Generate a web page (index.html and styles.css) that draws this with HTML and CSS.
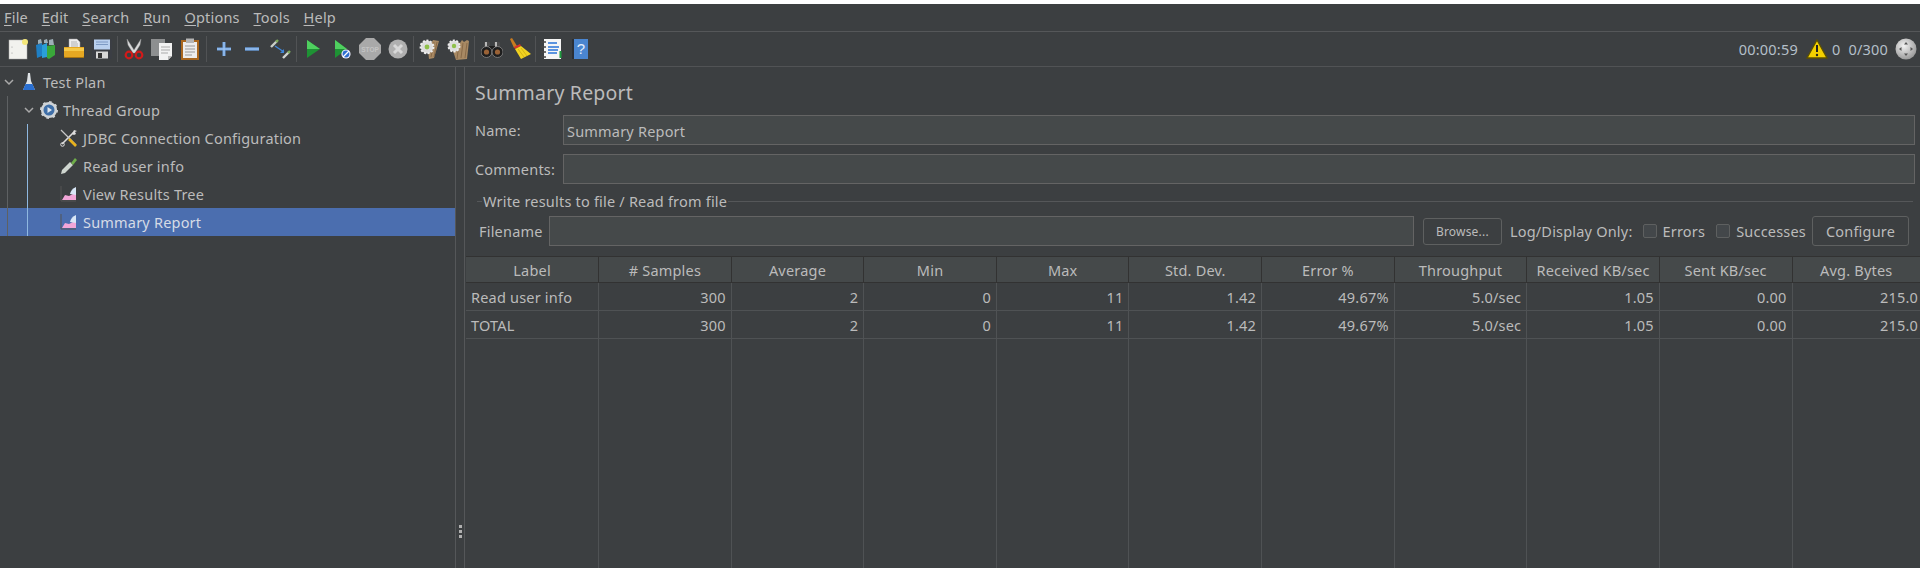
FILE: index.html
```html
<!DOCTYPE html>
<html lang="en">
<head>
<meta charset="utf-8">
<title>Apache JMeter - Summary Report</title>
<link rel="stylesheet" href="styles.css">
</head>
<body>
<div class="app">
  <nav class="menubar">
    <span><u>F</u>ile</span><span><u>E</u>dit</span><span><u>S</u>earch</span><span><u>R</u>un</span><span><u>O</u>ptions</span><span><u>T</u>ools</span><span><u>H</u>elp</span>
  </nav>
  <div class="toolbar">
    <button class="tb"><svg viewBox="0 0 22 22"><rect x="2" y="2" width="18" height="19" fill="#f2f2ee" stroke="#aaa" stroke-width=".5"/><circle cx="18" cy="4" r="3" fill="#f4e77a"/><circle cx="5" cy="9" r=".6" fill="#999"/><circle cx="5" cy="15" r=".6" fill="#999"/></svg></button>
    <button class="tb"><svg viewBox="0 0 22 22"><path d="M1 7l6-2v13l-5 2z" fill="#1f7fc4"/><path d="M7 7l5-2v14l-5 1z" fill="#2a9fd8"/><path d="M12 8l8-1v10l-6 4-2-1z" fill="#3aa83a"/><path d="M3 6V2l3-1 1 4zM9 5V2l3-1 1 4zM14 7V2l4-1 1 6z" fill="#9fb0b8"/></svg></button>
    <button class="tb"><svg viewBox="0 0 22 22"><path d="M6 1h8l3 3v6H6z" fill="#eee" stroke="#999" stroke-width=".5"/><path d="M8 4h6M8 6h7M8 8h7" stroke="#999" stroke-width=".7"/><path d="M1 9h20v9q0 2-2 2H3q-2 0-2-2z" fill="#e6a822"/><path d="M1 10h20v3H1z" fill="#f6c948"/><path d="M1 19h20v1H1z" fill="#a87412"/></svg></button>
    <button class="tb"><svg viewBox="0 0 22 22"><rect x="1" y="1" width="20" height="20" rx="1.5" fill="#3b3e44"/><rect x="3" y="1.5" width="16" height="10" fill="#b9d0ee"/><path d="M5 4h12M5 6.5h12" stroke="#6d8cb8" stroke-width=".8"/><rect x="5" y="13.5" width="12" height="7" fill="#d8d8d8"/><rect x="7" y="15" width="4" height="5" fill="#333"/></svg></button>
    <span class="sep"></span>
    <button class="tb"><svg viewBox="0 0 22 22"><path d="M4 1l7 11 7-11-1 6-5 8h-2L5 7z" fill="#d9dadb" stroke="#999" stroke-width=".4"/><circle cx="6" cy="17" r="3.3" fill="none" stroke="#d21a1a" stroke-width="2.2"/><circle cx="16" cy="17" r="3.3" fill="none" stroke="#d21a1a" stroke-width="2.2"/></svg></button>
    <button class="tb"><svg viewBox="0 0 22 22"><rect x="0" y="1" width="14" height="17" fill="#8d8f90"/><path d="M8 5h13v13l-4 4H8z" fill="#f2f2f2"/><path d="M10 9h9M10 12h9M10 15h7" stroke="#aaa"/><path d="M17 22v-4h4z" fill="#bbb"/></svg></button>
    <button class="tb"><svg viewBox="0 0 22 22"><rect x="2" y="2" width="18" height="20" fill="#a9671f"/><rect x="4" y="4" width="14" height="16" fill="#ededed"/><rect x="7" y="0.5" width="8" height="4.5" fill="#b5b5b5"/><path d="M6 8h10M6 11h10M6 14h10M6 17h7" stroke="#999"/></svg></button>
    <span class="sep wide"></span>
    <button class="tb"><svg viewBox="0 0 22 22"><path d="M11 4v14M4 11h14" stroke="#6a9fe0" stroke-width="3"/><path d="M11 4v14M4 11h14" stroke="#a9cbf2" stroke-width="1"/></svg></button>
    <button class="tb"><svg viewBox="0 0 22 22"><path d="M4 11h14" stroke="#6a9fe0" stroke-width="3.4"/><path d="M4 11h14" stroke="#a9cbf2" stroke-width="1"/></svg></button>
    <button class="tb"><svg viewBox="0 0 22 22"><path d="M2 9l6-6" stroke="#c9cfc9" stroke-width="2.4"/><path d="M7 4l2-2" stroke="#7fae5c" stroke-width="2.4"/><path d="M14 20l6-6" stroke="#d2d6d2" stroke-width="2.4"/><path d="M19 15l2-2" stroke="#7fae5c" stroke-width="2.4"/><path d="M6 8l9 6" stroke="#3f86d8" stroke-width="1.4"/><path d="M15 11v4h-4z" fill="#3f86d8"/></svg></button>
    <span class="sep wide"></span>
    <button class="tb"><svg viewBox="0 0 22 22"><path d="M4 2l13 9-13 9z" fill="#1e9234"/><path d="M4 2l13 9H4z" fill="#4fd05f"/></svg></button>
    <button class="tb"><svg viewBox="0 0 22 22"><path d="M4 2l12 9-12 9z" fill="#1e9234"/><path d="M4 2l12 9H4z" fill="#4fd05f"/><circle cx="15" cy="16" r="4.6" fill="#eef"/><circle cx="15" cy="16" r="3.4" fill="#2f6fd0"/><path d="M12 19l6-6" stroke="#fff" stroke-width="1.3"/></svg></button>
    <button class="tb"><svg viewBox="0 0 22 22"><path d="M7 0h8l7 7v8l-7 7H7l-7-7V7z" fill="#a9a9a9"/><text x="11" y="13.5" class="stoptext">STOP</text></svg></button>
    <button class="tb"><svg viewBox="0 0 22 22"><circle cx="11" cy="11" r="9.5" fill="#b0b0b0"/><path d="M7 7l8 8M15 7l-8 8" stroke="#d8d8d8" stroke-width="3"/></svg></button>
    <span class="sep"></span>
    <button class="tb"><svg viewBox="0 0 22 22"><path d="M14 2l6 1-5 17-5 1-1-9z" fill="#a88963"/><path d="M15 4l-3 15M18 4l-3 15" stroke="#7a5c3c" stroke-width=".7"/><circle cx="8" cy="9" r="6.4" fill="#ddd" stroke="#eee" stroke-dasharray="2 1.6" stroke-width="2"/><circle cx="8" cy="9" r="2.4" fill="#8fc04a"/></svg></button>
    <button class="tb"><svg viewBox="0 0 22 22"><path d="M9 3l4 2 2-3 2 2 3-2 2 1-2 18-11 1-3-9z" fill="#a88963"/><path d="M12 6l-2 15M16 5l-2 15M20 5l-2 15" stroke="#7a5c3c" stroke-width=".7"/><circle cx="7" cy="8" r="5.6" fill="#ddd" stroke="#eee" stroke-dasharray="2 1.5" stroke-width="1.8"/><circle cx="7" cy="8" r="2.2" fill="#8fc04a"/></svg></button>
    <span class="sep wide"></span>
    <button class="tb"><svg viewBox="0 0 22 22"><rect x="3" y="4" width="6" height="7" rx="1" fill="#4a4a4a"/><rect x="13" y="4" width="6" height="7" rx="1" fill="#4a4a4a"/><rect x="4" y="4" width="2" height="6" fill="#b8b8b8"/><rect x="14" y="4" width="2" height="6" fill="#b8b8b8"/><rect x="8" y="8" width="6" height="5" fill="#1e1e1e"/><circle cx="5.500" cy="14" r="5.500" fill="#1e1e1e" stroke="#8a8a8a" stroke-width=".8"/><circle cx="16.500" cy="14" r="5.500" fill="#1e1e1e" stroke="#8a8a8a" stroke-width=".8"/><circle cx="5.500" cy="14" r="2.600" fill="#9a6236"/><circle cx="16.500" cy="14" r="2.600" fill="#9a6236"/></svg></button>
    <button class="tb"><svg viewBox="0 0 22 22"><path d="M1 1l2-1 5 8-3 2z" fill="#c87b20"/><path d="M5 9l6-3 1 2-6 3z" fill="#d8302a"/><path d="M6 11l6-3 10 8-10 5z" fill="#f1d321"/><path d="M9 11l6 8M12 10l6 8" stroke="#c9a60c" stroke-width=".7"/></svg></button>
    <span class="sep"></span>
    <button class="tb"><svg viewBox="0 0 22 22"><rect x="3" y="1" width="17" height="20" fill="#f5f5f5"/><path d="M7 5h9M7 9h11M7 12h10M7 15h9" stroke="#2873d8" stroke-width="1.5"/><path d="M0 4h5M0 9h5M0 14h5M0 19h5" stroke="#444" stroke-width="1.6"/><rect x="18.500" y="13" width="2" height="7" fill="#1f9a3f"/></svg></button>
    <button class="tb"><svg viewBox="0 0 22 22"><rect x="3" y="1" width="4" height="20" fill="#2b2f36"/><rect x="5" y="1" width="14" height="20" fill="#4a85cf"/><text x="12" y="16" class="helptext">?</text></svg></button>
    <div class="status">
      <span>00:00:59</span>
      <svg class="warn" viewBox="0 0 22 20"><path d="M11 1l10 18H1z" fill="#f4d000" stroke="#5c5000" stroke-width="1.300"/><path d="M11 6v7" stroke="#222" stroke-width="2"/><circle cx="11" cy="16" r="1.200" fill="#222"/></svg>
      <span class="st-n">0</span>
      <span>0/300</span>
      <svg class="globe" viewBox="0 0 22 22"><defs><radialGradient id="g" cx=".4" cy=".35" r=".75"><stop offset="0" stop-color="#f3f3f3"/><stop offset="1" stop-color="#8e8e8e"/></radialGradient></defs><circle cx="11" cy="11" r="10.500" fill="url(#g)"/><path d="M11 4l2 2.500h-4zM11 18l2-2.500h-4zM4 11l2.500-2v4zM18 11l-2.500-2v4z" fill="#555"/></svg>
    </div>
  </div>
  <main class="split">
    <aside class="tree">
      <div class="node lvl0"><svg class="chev" viewBox="0 0 10 10"><path d="M1 3l4 4 4-4" fill="none" stroke="#aaa" stroke-width="1.500"/></svg><svg class="ico" viewBox="0 0 18 18"><path d="M8 0h2l1 8 4 9H3l4-9z" fill="#dfe3e6"/><path d="M5.500 11h7l2.500 6H3z" fill="#2a6fd0"/></svg><span>Test Plan</span></div>
      <div class="node lvl1"><svg class="chev" viewBox="0 0 10 10"><path d="M1 3l4 4 4-4" fill="none" stroke="#aaa" stroke-width="1.500"/></svg><svg class="ico gear" viewBox="0 0 18 18"><circle cx="9" cy="9" r="6.800" fill="#3f6fa8" stroke="#cfd3d6" stroke-width="2.600"/><circle cx="9" cy="9" r="7.800" fill="none" stroke="#cfd3d6" stroke-width="2.400" stroke-dasharray="2.500 3.600"/><path d="M7.500 6l4.500 3-4.500 3z" fill="#dfe6ee"/></svg><span>Thread Group</span></div>
      <div class="node lvl2"><svg class="ico" viewBox="0 0 18 18"><path d="M2 15L14 3" stroke="#ddd" stroke-width="1.600"/><path d="M12 5l2-4 3 1-2 1 1 2-2 1z" fill="#ddd"/><path d="M1 1l15 15" stroke="#c9c9c9" stroke-width="1.200"/><path d="M9 10l7 7" stroke="#e7b21c" stroke-width="2.600"/><circle cx="2.500" cy="15.500" r="1.800" fill="none" stroke="#ddd"/></svg><span>JDBC Connection Configuration</span></div>
      <div class="node lvl2"><svg class="ico" viewBox="0 0 18 18"><path d="M10 5l3 3-8 8-4 1 1-4z" fill="#cfd6d0"/><path d="M11 6l4-5 2 2-4 5z" fill="#6fae4a"/></svg><span>Read user info</span></div>
      <div class="node lvl2"><svg class="ico" viewBox="0 0 18 18"><path d="M1 1v15h15" fill="none" stroke="#555"/><path d="M2 15l3-5 4 1 4-2 3 0v6z" fill="#f2a6d8"/><path d="M10 9q1-5 6-7l0 8z" fill="#d8e6f6"/></svg><span>View Results Tree</span></div>
      <div class="node lvl2 sel"><svg class="ico" viewBox="0 0 18 18"><path d="M1 1v15h15" fill="none" stroke="#555"/><path d="M2 15l3-5 4 1 4-2 3 0v6z" fill="#f2a6d8"/><path d="M10 9q1-5 6-7l0 8z" fill="#d8e6f6"/></svg><span>Summary Report</span></div>
      <i class="guide guide-a"></i><i class="guide guide-b"></i>
    </aside>
    <div class="divider"><i></i><i></i><i></i></div>
    <section class="panel">
      <div class="form">
        <h1>Summary Report</h1>
        <div class="row"><label>Name:</label><div class="input">Summary Report</div></div>
        <div class="row"><label>Comments:</label><div class="input"></div></div>
        <fieldset class="group">
          <legend>Write results to file / Read from file</legend>
          <div class="filerow">
            <label class="fn">Filename</label>
            <div class="input grow"></div>
            <button class="btn small">Browse...</button>
            <span class="log">Log/Display Only:</span>
            <span class="check"><i></i>Errors</span>
            <span class="check"><i></i>Successes</span>
            <button class="btn conf">Configure</button>
          </div>
        </fieldset>
      </div>
      <table class="report">
        <thead><tr><th>Label</th><th># Samples</th><th>Average</th><th>Min</th><th>Max</th><th>Std. Dev.</th><th>Error %</th><th>Throughput</th><th>Received KB/sec</th><th>Sent KB/sec</th><th>Avg. Bytes</th></tr></thead>
        <tbody>
          <tr><td>Read user info</td><td>300</td><td>2</td><td>0</td><td>11</td><td>1.42</td><td>49.67%</td><td>5.0/sec</td><td>1.05</td><td>0.00</td><td>215.0</td></tr>
          <tr><td>TOTAL</td><td>300</td><td>2</td><td>0</td><td>11</td><td>1.42</td><td>49.67%</td><td>5.0/sec</td><td>1.05</td><td>0.00</td><td>215.0</td></tr>
          <tr class="filler"><td></td><td></td><td></td><td></td><td></td><td></td><td></td><td></td><td></td><td></td><td></td></tr>
        </tbody>
      </table>
    </section>
  </main>
</div>
</body>
</html>
```
FILE: styles.css
```css
* { box-sizing: border-box; }
html, body { margin: 0; height: 100%; background: #3c3f41; }
body { overflow: hidden; font-family: "Noto Sans", "Open Sans", sans-serif; font-size: 14.5px; letter-spacing: .2px; color: #bbbbbb; }
.app { height: 568px; border-top: 4px solid #fff; display: flex; flex-direction: column; background: #3c3f41; }

.menubar { height: 28px; flex: none; display: flex; align-items: center; gap: 13.75px; padding: 0 4px 2px; border-bottom: 1px solid #555759; }
.menubar u { text-underline-offset: 2px; }

.toolbar { height: 35px; flex: none; display: flex; align-items: center; padding-left: 3.5px; padding-right: 3px; border-bottom: 1px solid #515355; }
.tb { width: 28px; height: 28px; flex: none; padding: 0; border: 0; background: none; display: flex; align-items: center; justify-content: center; }
.tb svg { width: 22px; height: 22px; display: block; }
.sep { width: 1px; height: 26px; background: #515355; margin: 0 1.5px; flex: none; }
.sep.wide { margin: 0 2.5px; }
.stoptext { font-size: 6.5px; font-weight: 700; fill: #c4c4c4; text-anchor: middle; }
.helptext { font-size: 15px; fill: #e4eefb; text-anchor: middle; }
.status { margin-left: auto; display: flex; align-items: center; gap: 8px; color: #b4bfc9; }
.status .warn { width: 22px; height: 20px; }
.status .st-n { margin-left: -4px; }
.status .globe { width: 22px; height: 22px; margin-left: -1px; }

.split { flex: 1; min-height: 0; display: flex; }
.tree { width: 455px; flex: none; position: relative; padding-top: 1px; }
.node { height: 28px; display: flex; align-items: center; white-space: nowrap; position: relative; z-index: 1; }
.node .chev { width: 10px; height: 10px; flex: none; }
.node .ico { width: 18px; height: 18px; flex: none; margin-right: 5px; }
.lvl0 { padding-left: 4px; }
.lvl0 .chev { margin-right: 6px; }
.lvl1 { padding-left: 24px; }
.lvl1 .chev { margin-right: 6px; }
.lvl2 { padding-left: 60px; }
.sel { background: #4b6eaf; color: #d5dbe6; }
.guide { position: absolute; width: 1px; display: block; z-index: 2; }
.guide-a { left: 7px; top: 29px; height: 140px; background: #5e6163; }
.guide-b { left: 27px; top: 57px; height: 112px; background: #8fb8e0; }

.divider { width: 10px; flex: none; border-left: 1px solid #555759; border-right: 1px solid #555759; display: flex; flex-direction: column; align-items: center; justify-content: center; gap: 2px; padding-top: 428px; }
.divider i { width: 3px; height: 3px; background: #b0b0b0; display: block; }

.panel { flex: 1; min-width: 0; display: flex; flex-direction: column; padding-left: 1px; }
.form { padding: 0 5px 0 9px; }
h1 { margin: 0; height: 48px; display: flex; align-items: center; font-weight: 400; font-size: 19.5px; color: #bbbbbb; padding-top: 3px; }
.row { display: flex; align-items: center; height: 30px; margin-bottom: 9px; }
.row label { width: 88px; flex: none; }
.input { flex: 1; height: 30px; background: #45494a; border: 1px solid #646464; padding: 1px 3px 0; display: flex; align-items: center; }
.group { border: 0; border-top: 1px solid #555759; margin: 0 2px; padding: 7px 0 0 2px; min-width: 0; }
.group legend { padding: 0 1px; margin-left: 3px; line-height: 17px; }
.filerow { display: flex; align-items: center; height: 30px; margin-top: -1px; }
.fn { width: 70px; flex: none; }
.grow { flex: 1; min-width: 0; }
.btn { flex: none; background: #3c3f41; border: 1px solid #5e6060; border-radius: 3px; color: #bbbbbb; font-family: inherit; letter-spacing: inherit; padding: 0; display: flex; align-items: center; justify-content: center; }
.small { width: 79px; height: 27px; font-size: 12px; margin: 0 8px 0 9px; }
.conf { width: 97px; height: 30px; font-size: 14.5px; margin: 0 4px 0 6px; }
.log { margin-right: 10px; white-space: nowrap; }
.check { display: flex; align-items: center; white-space: nowrap; margin-right: 11px; }
.check:last-of-type { margin-right: 0; }
.check i { width: 14px; height: 14px; border: 1px solid #5e6060; border-radius: 2px; background: #43474a; margin-right: 6px; display: block; }

.report { border-collapse: collapse; table-layout: fixed; width: 100%; margin-top: 10px; flex: none; }
.report th { height: 26px; font-weight: 400; background: #45494a; border-right: 1px solid #323232; border-top: 1px solid #323232; border-bottom: 1px solid #323232; padding: 0; overflow: hidden; white-space: nowrap; }
.report td { height: 28px; border-right: 1px solid #4f5254; border-bottom: 1px solid #4f5254; text-align: right; padding: 0 5px; white-space: nowrap; }
.report td:first-child { text-align: left; }
.report th:last-child { width: 128px; }
.report th:last-child, .report td:last-child { border-right: 0; }
.report td:last-child { padding-right: 2px; }
.report .filler td { height: 230px; border-bottom: 0; }
```
